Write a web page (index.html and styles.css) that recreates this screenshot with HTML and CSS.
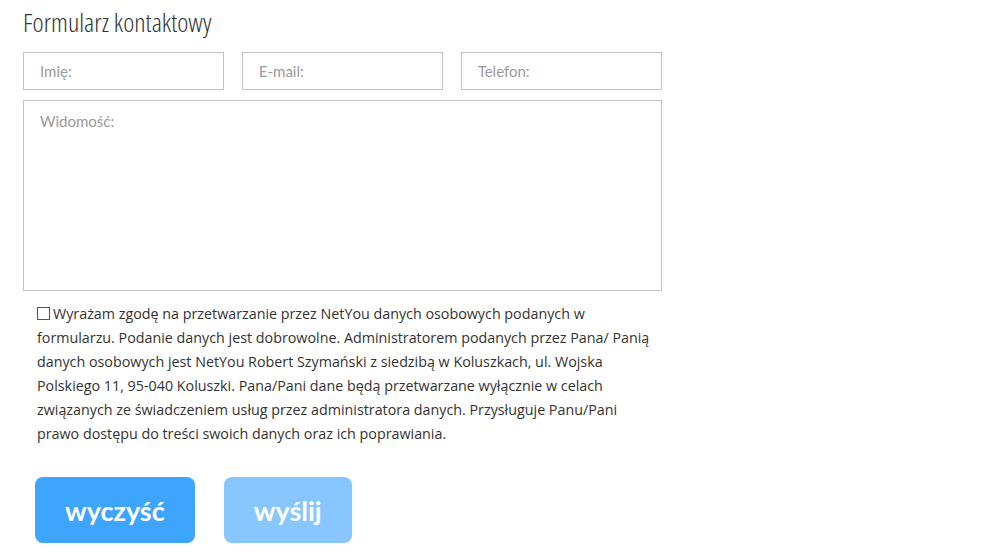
FILE: index.html
```html
<!DOCTYPE html>
<html>
  <head>
    <title>Formularz kontaktowy</title>
    <link rel="stylesheet" href="styles.css">
  </head>
  <body>
    <div class="contact">
      <h1>Formularz kontaktowy</h1>
      <form class="contact-form">
        <div class="row">
          <input type="text" placeholder="Imię:">
          <input type="text" placeholder="E-mail:">
          <input type="text" placeholder="Telefon:">
        </div>
        <textarea placeholder="Widomość:"></textarea>
        <p class="consent">
          <span class="box"></span>Wyrażam zgodę na przetwarzanie przez NetYou danych osobowych podanych w formularzu. Podanie danych jest dobrowolne. Administratorem podanych przez Pana/ Panią danych osobowych jest NetYou Robert Szymański z siedzibą w Koluszkach, ul. Wojska Polskiego 11, 95-040 Koluszki. Pana/Pani dane będą przetwarzane wyłącznie w celach związanych ze świadczeniem usług przez administratora danych. Przysługuje Panu/Pani prawo dostępu do treści swoich danych oraz ich poprawiania.
        </p>
        <div class="buttons">
          <button type="reset" class="btn">wyczyść</button>
          <button type="button" class="btn btn-light">wyślij</button>
        </div>
      </form>
    </div>
  </body>
</html>
```

FILE: styles.css
```css
body {
  margin: 0;
  background: #fff;
  color: #333;
  font-family: "Open Sans", sans-serif;
}
.contact {
  width: 639px;
  padding: 5px 0 0 23px;
}
h1 {
  font-family: "Open Sans", sans-serif;
  font-weight: 300;
  font-stretch: 75%;
  font-size: 26.5px;
  color: #333;
  margin: 0 0 13px;
  line-height: 34px;
}
.row {
  display: flex;
  gap: 17.5px;
  margin-bottom: 10px;
}
input,
textarea {
  font-family: Lato, sans-serif;
  font-size: 15px;
  color: #333;
  border: 1px solid #c3c3c3;
  border-radius: 0;
  outline: none;
  box-sizing: border-box;
  padding: 0 16px;
}
input {
  flex: 1;
  min-width: 0;
  height: 38px;
}
textarea {
  display: block;
  width: 639px;
  height: 191px;
  padding-top: 11px;
  resize: none;
}
input::placeholder,
textarea::placeholder {
  color: #9a9a9a;
}
.consent {
  font-size: 14.3px;
  line-height: 24px;
  margin: 11px 0 0;
  padding-left: 14px;
  width: 620px;
}
.box {
  display: inline-block;
  width: 11px;
  height: 11px;
  border: 1px solid #555;
  margin-right: 3px;
  vertical-align: -1px;
}
.buttons {
  display: flex;
  gap: 29px;
  margin: 31px 0 0 12px;
}
.btn {
  font-family: Lato, sans-serif;
  font-weight: bold;
  font-size: 27px;
  color: #fff;
  background: #3ea5fd;
  border: none;
  border-radius: 8px;
  height: 66px;
  padding: 0 30px;
  cursor: pointer;
}
.btn-light {
  background: #87c6fe;
}
```
